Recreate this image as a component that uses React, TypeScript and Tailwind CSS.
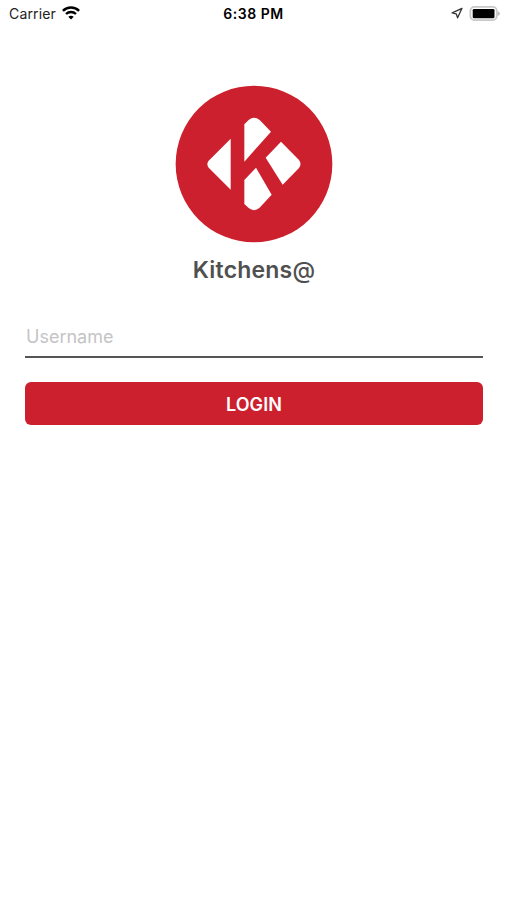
function Logo() {
  return (
    <svg className="h-[158px] w-[158px]" viewBox="15 16 474 474" aria-label="Kitchens@ logo">
      <circle cx="252" cy="253" r="235" fill="#cc202e" />
      <g fill="#fff">
        <path d="M182 177V330L116 264Q108 253 116 243Z" />
        <path d="M223 246V134L236 121Q252 108 269 121L303 156Z" />
        <path d="M333 186L387 241Q396 253 387 265L338 315L287 234Z" />
        <path d="M223 301L258 264L305 345L268 385Q252 398 236 385L223 373Z" />
      </g>
    </svg>
  );
}

function Wifi() {
  return (
    <svg className="h-[14px] w-[18px]" viewBox="0 0 18 14" fill="none" stroke="#000">
      <path d="M.9 4.8C5.4 .4 12.6 .4 17.1 4.8" strokeWidth="2.5" />
      <path d="M4 8C6.8 5.3 11.2 5.3 14 8" strokeWidth="2.4" />
      <path d="M9 13.6L6.3 10.8Q9 8.6 11.7 10.8Z" fill="#000" stroke="none" />
    </svg>
  );
}

function StatusBar() {
  return (
    <header className="grid h-[26px] grid-cols-3 items-center pl-[9px] pr-[7px] text-[14px] text-black">
      <div className="flex items-center gap-[6px]">
        <span className="tracking-[0.15px] text-[#222]">Carrier</span>
        <Wifi />
      </div>
      <span className="pr-[2px] text-center font-semibold tracking-[0.5px]">6:38 PM</span>
      <div className="flex items-center justify-end gap-[6px]">
        <svg className="h-3 w-3" viewBox="0 0 12 12" fill="none" stroke="#333" strokeWidth="1.3" strokeLinejoin="round">
          <path d="M11 1.3L1.2 5.9L5.2 6.8L6.6 10.8Z" />
        </svg>
        <svg className="h-[15px] w-[31px]" viewBox="0 0 31 15">
          <rect x="1.4" y=".9" width="26.4" height="13.2" rx="4" fill="#fff" stroke="#c8c8c8" strokeWidth="1.8" />
          <rect x="3.7" y="2.9" width="21.8" height="9.4" rx="1.4" fill="#000" />
          <path d="M28.6 5Q31 6 31 7.5T28.6 10Z" fill="#bbb" />
        </svg>
      </div>
    </header>
  );
}

export default function App() {
  return (
    <div className="min-h-[900px] w-full bg-white font-['Inter',sans-serif]">
      <StatusBar />
      <main className="flex flex-col items-center pl-[25px] pr-[24px] pt-[59px]">
        <Logo />
        <h1 className="mt-[11px] text-[23px] font-semibold leading-8 tracking-[0.2px] text-[#505050]">
          Kitchens<span className="font-medium">@</span>
        </h1>
        <input
          type="text"
          placeholder="Username"
          className="mt-[29px] h-[43px] w-full border-b-2 border-[#555] bg-transparent pl-px pt-px text-[18px] text-[#333] outline-none placeholder:text-[#c4c4c6]"
        />
        <button className="mt-[24px] h-[43px] w-full rounded-[6px] bg-[#cc202e] pt-px text-[18px] font-semibold tracking-[0.1px] text-white">
          LOGIN
        </button>
      </main>
    </div>
  );
}
